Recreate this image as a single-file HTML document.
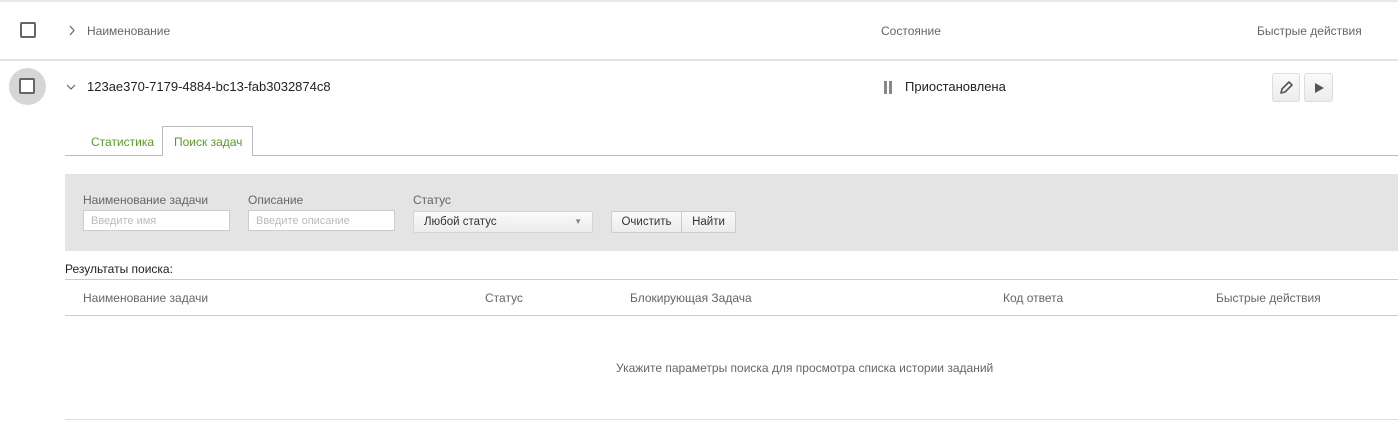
<!DOCTYPE html>
<html><head><meta charset="utf-8"><style>
*{margin:0;padding:0;box-sizing:border-box}
body{width:1398px;height:423px;background:#fff;font-family:"Liberation Sans",sans-serif;font-size:12px;color:#555;position:relative;overflow:hidden}
.a{position:absolute;white-space:nowrap}
.cb{position:absolute;width:16px;height:16px;border:2px solid #666;border-radius:2px;background:#fff}
.hl{position:absolute;height:1px;background:#ddd}
.inp{position:absolute;height:21px;background:#fff;border:1px solid #ccc;color:#bbb;padding:4px 7px;font-size:11px}
.btn{position:absolute;height:22px;background:linear-gradient(#fafafa,#ececec);border:1px solid #ccc;color:#333;text-align:center;line-height:20px;font-size:11.5px}
</style></head><body>
<div class="hl" style="left:0;top:0;width:1398px;height:2px;background:#e8e8e8"></div>
<div class="cb" style="left:20px;top:22px"></div>
<svg class="a" style="left:69px;top:25px" width="7" height="11"><path d="M1 1l4 4.5-4 4.5" stroke="#666" fill="none" stroke-width="1.2"/></svg>
<div class="a" style="left:87px;top:24px;color:#666">Наименование</div>
<div class="a" style="left:881px;top:24px;color:#666">Состояние</div>
<div class="a" style="left:1257px;top:24px;color:#666">Быстрые действия</div>
<div class="hl" style="left:0;top:59px;width:1398px;height:2px;background:#e3e3e3"></div>
<div class="a" style="left:9px;top:68px;width:37px;height:37px;border-radius:50%;background:#d6d6d6"></div>
<div class="cb" style="left:19px;top:78px"></div>
<svg class="a" style="left:66px;top:84px" width="10" height="7"><path d="M1 1l4 4 4-4" stroke="#666" fill="none" stroke-width="1.2"/></svg>
<div class="a" style="left:87px;top:79px;font-size:13px;color:#222">123ae370-7179-4884-bc13-fab3032874c8</div>
<div class="a" style="left:884px;top:81px;width:3px;height:13px;background:#888"></div>
<div class="a" style="left:889px;top:81px;width:3px;height:13px;background:#888"></div>
<div class="a" style="left:905px;top:79px;font-size:13px;color:#222">Приостановлена</div>
<div class="btn" style="left:1272px;top:73px;width:28px;height:29px;border-radius:3px;border-color:#ddd"><svg width="16" height="16" style="margin-top:6px"><path d="M3 13l1-4 7-7 3 3-7 7z" stroke="#555" stroke-width="1.6" fill="none" stroke-linejoin="round"/></svg></div>
<div class="btn" style="left:1304px;top:73px;width:29px;height:29px;border-radius:3px;border-color:#ddd"><svg width="12" height="12" style="margin-top:8px"><path d="M2 1l9 5-9 5z" fill="#555"/></svg></div>
<div class="hl" style="left:65px;top:155px;width:1333px;background:#bbb"></div>
<div class="a" style="left:91px;top:135px;color:#5a9a2a">Статистика</div>
<div class="a" style="left:162px;top:126px;width:91px;height:30px;border:1px solid #bbb;border-bottom:none;background:#fff"></div>
<div class="a" style="left:174px;top:135px;color:#5a9a2a">Поиск задач</div>
<div class="a" style="left:65px;top:174px;width:1333px;height:77px;background:#e4e4e4"></div>
<div class="a" style="left:83px;top:193px;color:#666">Наименование задачи</div>
<div class="a" style="left:248px;top:193px;color:#666">Описание</div>
<div class="a" style="left:413px;top:193px;color:#666">Статус</div>
<div class="inp" style="left:83px;top:210px;width:147px">Введите имя</div>
<div class="inp" style="left:248px;top:210px;width:147px">Введите описание</div>
<div class="btn" style="left:413px;top:211px;width:180px;text-align:left;padding-left:10px;border-radius:2px;border-color:#d4d4d4">Любой статус<span style="position:absolute;right:10px;top:0;color:#888;font-size:8px">&#9660;</span></div>
<div class="btn" style="left:611px;top:211px;width:71px;border-radius:2px 0 0 2px">Очистить</div>
<div class="btn" style="left:681px;top:211px;width:55px;border-radius:0 2px 2px 0">Найти</div>
<div class="a" style="left:65px;top:262px;color:#222">Результаты поиска:</div>
<div class="hl" style="left:65px;top:279px;width:1333px;background:#ccc"></div>
<div class="a" style="left:83px;top:291px;color:#666">Наименование задачи</div>
<div class="a" style="left:485px;top:291px;color:#666">Статус</div>
<div class="a" style="left:630px;top:291px;color:#666">Блокирующая Задача</div>
<div class="a" style="left:1003px;top:291px;color:#666">Код ответа</div>
<div class="a" style="left:1216px;top:291px;color:#666">Быстрые действия</div>
<div class="hl" style="left:65px;top:315px;width:1333px;background:#ccc"></div>
<div class="a" style="left:616px;top:361px;color:#666">Укажите параметры поиска для просмотра списка истории заданий</div>
<div class="hl" style="left:65px;top:419px;width:1333px;background:#ddd"></div>
</body></html>
